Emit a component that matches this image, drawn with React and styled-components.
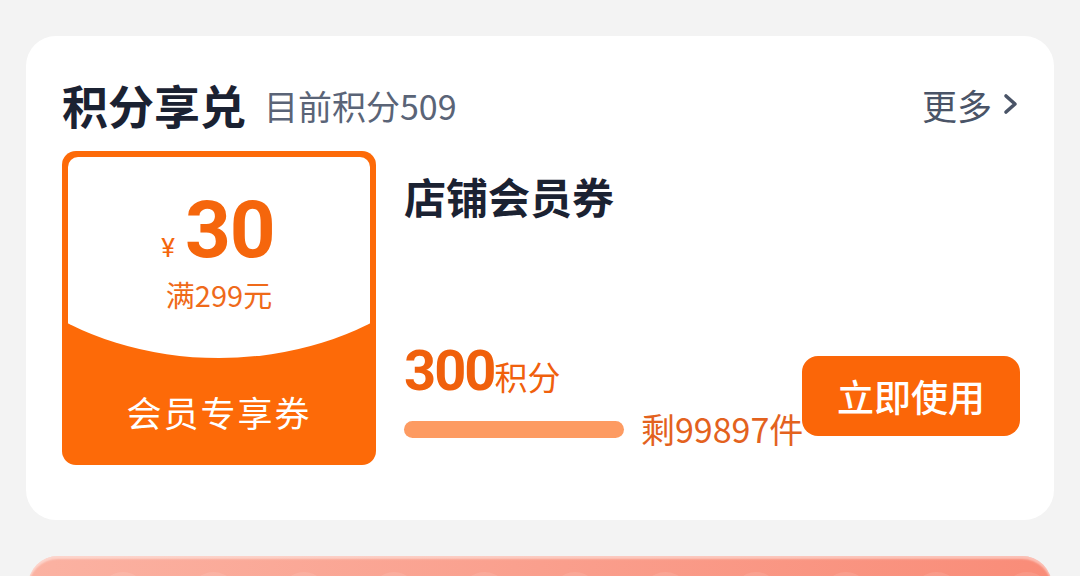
import React from 'react'
import styled, { createGlobalStyle } from 'styled-components'

const GlobalStyle = createGlobalStyle`
    html, body {
        margin: 0;
        padding: 0;
        background: #f3f3f3;
        overflow: hidden;
    }
    body {
        font-family: "Noto Sans CJK SC", "Noto Sans", sans-serif;
    }
`

const Page = styled.div`
    width: 1080px;
    height: 576px;
    box-sizing: border-box;
    padding: 36px 26px 0;
    overflow: hidden;
`

const Card = styled.div`
    background: #fff;
    border-radius: 30px;
    padding: 36px 34px 55px 36px;
`

const Header = styled.div`
    display: flex;
    align-items: center;
    height: 64px;
    margin-bottom: 15px;
`

const Title = styled.h2`
    margin: 0;
    font-size: 46px;
    font-weight: 700;
    line-height: 1;
    color: #1b2232;
`

const Balance = styled.span`
    margin-left: 18px;
    font-size: 34px;
    line-height: 1;
    color: #5a6477;
    margin-top: 4px;
`

const More = styled.a`
    margin-left: auto;
    display: flex;
    align-items: center;
    gap: 10px;
    font-size: 35px;
    line-height: 1;
    color: #4a5467;
    text-decoration: none;
`

const Body = styled.div`
    display: flex;
    gap: 30px;
`

const Coupon = styled.div`
    flex: none;
    width: 314px;
    height: 314px;
    box-sizing: border-box;
    padding: 6px;
    border-radius: 14px;
    background: #fd6a08;
    display: flex;
    flex-direction: column;
`

const CouponFace = styled.div`
    height: 201px;
    flex: none;
    box-sizing: border-box;
    background: #fff;
    border-radius: 10px 10px 0 0;
    clip-path: ellipse(89% 100% at 50% 0);
    padding-top: 39px;
    display: flex;
    flex-direction: column;
    align-items: center;
    color: #f5660c;
`

const Amount = styled.div`
    display: flex;
    align-items: baseline;
    font-family: Roboto, "Liberation Sans", sans-serif;
    font-weight: 700;
    line-height: 0.85;
    margin-left: -2px;
`

const Yen = styled.span`
    font-size: 26px;
    font-weight: 400;
    margin-right: 10px;
`

const Big = styled.span`
    font-size: 80px;
    letter-spacing: -1px;
`

const Threshold = styled.div`
    margin-top: 16px;
    font-size: 29px;
    line-height: 1;
    color: #ef6a1a;
`

const CouponLabel = styled.div`
    flex: 1;
    display: flex;
    align-items: center;
    justify-content: center;
    padding-top: 6px;
    font-size: 35px;
    letter-spacing: 2px;
    color: #fff;
`

const Info = styled.div`
    flex: 1;
    position: relative;
    display: flex;
    flex-direction: column;
    padding-bottom: 15px;
`

const GoodsName = styled.h3`
    margin: 20px 0 0 -2px;
    font-size: 42px;
    font-weight: 600;
    line-height: 1.2;
    color: #1b2232;
`

const Points = styled.div`
    margin-top: auto;
    display: flex;
    align-items: baseline;
    color: #f0600c;
`

const PointsValue = styled.span`
    font-family: Roboto, "Liberation Sans", sans-serif;
    font-size: 56px;
    font-weight: 700;
    line-height: 1;
    letter-spacing: -2px;
    margin-left: -2px;
`

const PointsUnit = styled.span`
    font-size: 33px;
    line-height: 1;
`

const Stock = styled.div`
    margin-top: 10px;
    display: flex;
    align-items: center;
    gap: 17px;
`

const Bar = styled.div`
    width: 220px;
    height: 17px;
    border-radius: 9px;
    background: #fd9b62;
    margin-left: -2px;
`

const StockText = styled.span`
    font-size: 34px;
    line-height: 1.2;
    color: #e3621e;
`

const UseButton = styled.button`
    position: absolute;
    right: 0;
    top: 205px;
    width: 218px;
    height: 80px;
    border: none;
    border-radius: 16px;
    background: #fb6608;
    color: #fff;
    font-family: "Noto Sans CJK SC", sans-serif;
    font-size: 37px;
    font-weight: 500;
    cursor: pointer;
`

const Banner = styled.div`
    margin: 36px 2px 0;
    height: 120px;
    border-radius: 30px;
    background: linear-gradient(90deg, #fbb2a2, #f98c78);
    box-shadow: inset 0 3px 2px rgba(255, 255, 255, 0.45);
    display: flex;
    gap: 40px;
    padding: 16px 0 0 70px;
`

const Blob = styled.span`
    width: 56px;
    height: 56px;
    border-radius: 50%;
    background: rgba(255, 255, 255, 0.1);
`

function Chevron() {
    return (
        <svg width="18" height="22" viewBox="0 0 18 22">
            <path d="M4 3 L13 11 L4 19" fill="none" stroke="#4a5467" strokeWidth="3.6" strokeLinecap="round" strokeLinejoin="round" />
        </svg>
    )
}

export default function App() {
    return (
        <>
            <GlobalStyle />
            <Page>
                <Card>
                    <Header>
                        <Title>积分享兑</Title>
                        <Balance>目前积分509</Balance>
                        <More href="#">
                            更多
                            <Chevron />
                        </More>
                    </Header>
                    <Body>
                        <Coupon>
                            <CouponFace>
                                <Amount>
                                    <Yen>¥</Yen>
                                    <Big>30</Big>
                                </Amount>
                                <Threshold>满299元</Threshold>
                            </CouponFace>
                            <CouponLabel>会员专享券</CouponLabel>
                        </Coupon>
                        <Info>
                            <GoodsName>店铺会员券</GoodsName>
                            <Points>
                                <PointsValue>300</PointsValue>
                                <PointsUnit>积分</PointsUnit>
                            </Points>
                            <Stock>
                                <Bar />
                                <StockText>剩99897件</StockText>
                            </Stock>
                            <UseButton>立即使用</UseButton>
                        </Info>
                    </Body>
                </Card>
                <Banner>
                    {[0, 1, 2, 3, 4, 5, 6, 7, 8, 9, 10].map(i => (
                        <Blob key={i} />
                    ))}
                </Banner>
            </Page>
        </>
    )
}
